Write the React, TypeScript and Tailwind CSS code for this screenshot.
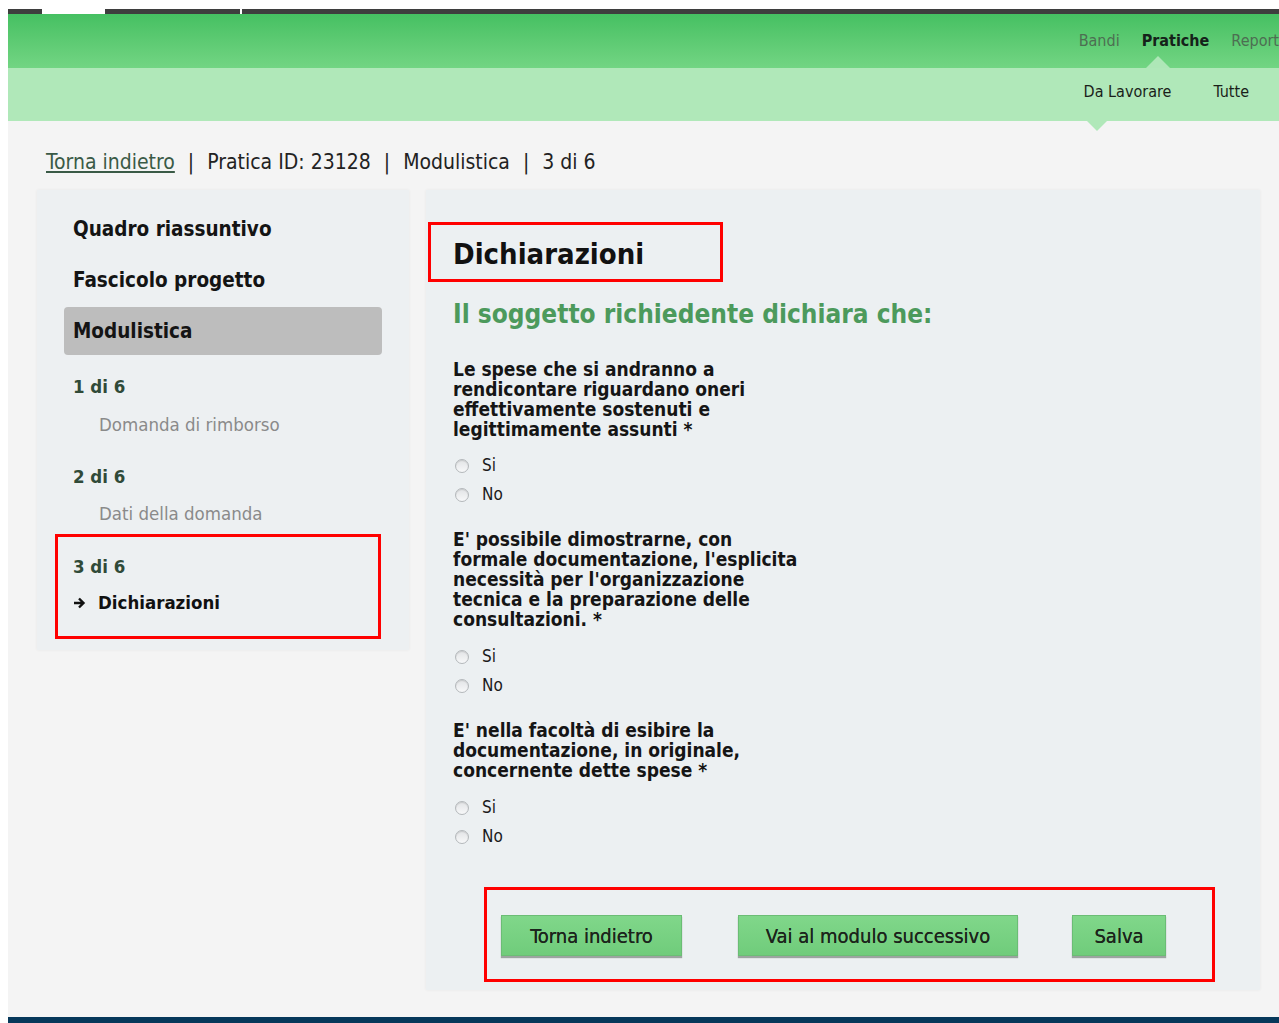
import React from 'react';

const font = { fontFamily: '"DejaVu Sans Condensed", "DejaVu Sans", sans-serif' };

interface Question {
  lines: string[];
}

const questions: Question[] = [
  {
    lines: [
      'Le spese che si andranno a',
      'rendicontare riguardano oneri',
      'effettivamente sostenuti e',
      'legittimamente assunti *',
    ],
  },
  {
    lines: [
      "E' possibile dimostrarne, con",
      "formale documentazione, l'esplicita",
      "necessità per l'organizzazione",
      'tecnica e la preparazione delle',
      'consultazioni. *',
    ],
  },
  {
    lines: [
      "E' nella facoltà di esibire la",
      'documentazione, in originale,',
      'concernente dette spese *',
    ],
  },
];

function Radio({ label }: { label: string }) {
  return (
    <label className="flex items-center h-[29px] text-[17px] text-[#1b1b1b]">
      <span className="w-[14px] h-[14px] rounded-full border border-[#b4b8bb] bg-gradient-to-b from-[#e2e4e6] to-[#f7f8f9] shadow-[inset_0_1px_1px_rgba(0,0,0,0.12)] ml-[2px]" />
      <span className="ml-[13px]">{label}</span>
    </label>
  );
}

function GreenButton({ width, children }: { width: string; children: React.ReactNode }) {
  return (
    <button
      className={`${width} h-[41px] bg-gradient-to-b from-[#80d78a] to-[#70cc7b] border border-[#6bbd75] shadow-[0_2px_1px_rgba(60,70,60,0.45)] text-[20px] text-[#1c241c] leading-none [text-shadow:0_0_0.6px_#1c241c]`}
    >
      {children}
    </button>
  );
}

function Sidebar() {
  return (
    <aside className="w-[372px] h-[460px] bg-[#edf0f2] shadow-[0_0_3px_rgba(0,0,0,0.06)] px-[27px] pt-[26px] shrink-0">
      <div className="px-[9px] h-[26px] flex items-center text-[20.5px] font-bold text-[#141414]">Quadro riassuntivo</div>
      <div className="px-[9px] h-[26px] mt-[25px] flex items-center text-[20.5px] font-bold text-[#141414]">Fascicolo progetto</div>
      <div className="px-[9px] h-[48px] mt-[14px] flex items-center rounded-[4px] bg-[#bdbdbd] text-[20.5px] font-bold text-[#141414]">Modulistica</div>

      <div className="px-[9px] mt-[21px] text-[18.5px] font-bold text-[#304a38] h-[22px] leading-[22px]">1 di 6</div>
      <div className="pl-[35px] mt-[16px] text-[18.5px] text-[#8a8a8a] h-[22px] leading-[22px]">Domanda di rimborso</div>
      <div className="px-[9px] mt-[30px] text-[18.5px] font-bold text-[#304a38] h-[22px] leading-[22px]">2 di 6</div>
      <div className="pl-[35px] mt-[15px] text-[18.5px] text-[#8a8a8a] h-[22px] leading-[22px]">Dati della domanda</div>

      <div className="-ml-[9px] mt-[9px] w-[326px] h-[105px] border-[3px] border-[#f00] pt-[19px]">
        <div className="pl-[15px] text-[18.5px] font-bold text-[#304a38] h-[22px] leading-[22px]">3 di 6</div>
        <div className="pl-[15px] mt-[14px] flex items-center text-[18.5px] font-bold text-[#111] h-[22px]">
          <svg width="13" height="12" viewBox="0 0 13 12" className="mr-[12px]">
            <path d="M1 6h9M6 1.5 10.5 6 6 10.5" stroke="#111" strokeWidth="2.4" fill="none" />
          </svg>
          Dichiarazioni
        </div>
      </div>
    </aside>
  );
}

// spacing above each question and above its radio group
const questionGap = ['mt-[30px]', 'mt-[20px]', 'mt-[20px]'];
const radioGap = ['mt-[12px]', 'mt-[13px]', 'mt-[13px]'];

function MainPanel() {
  return (
    <main className="w-[834px] h-[800px] bg-[#ecf0f2] shadow-[0_0_3px_rgba(0,0,0,0.06)] pt-[32px] pl-[2px]">
      <div className="w-[295px] h-[60px] border-[3px] border-[#f00] flex items-center pl-[22px] pt-[6px]">
        <h1 className="text-[29px] font-bold text-[#111]">Dichiarazioni</h1>
      </div>
      <div className="pl-[25px] pr-[30px]">
        <h2 className="mt-[17px] h-[30px] leading-[30px] text-[26px] font-bold text-[#4c9a5c]">
          Il soggetto richiedente dichiara che:
        </h2>

        {questions.map((q, i) => (
          <div key={i} className={questionGap[i]}>
            <p className="text-[19px] font-bold leading-[20px] text-[#151515] whitespace-nowrap">
              {q.lines.map((l, j) => (
                <span key={j} className="block">{l}</span>
              ))}
            </p>
            <div className={radioGap[i]}>
              <Radio label="Si" />
              <Radio label="No" />
            </div>
          </div>
        ))}
      </div>

      <div className="ml-[56px] mt-[36px] w-[731px] h-[95px] border-[3px] border-[#f00] flex items-center pl-[14px] pt-[2px]">
        <GreenButton width="w-[181px]">Torna indietro</GreenButton>
        <div className="ml-[56px]">
          <GreenButton width="w-[280px]">Vai al modulo successivo</GreenButton>
        </div>
        <div className="ml-[54px]">
          <GreenButton width="w-[94px]">Salva</GreenButton>
        </div>
      </div>
    </main>
  );
}

export default function App() {
  return (
    <div className="min-h-screen bg-white pl-[8px] overflow-hidden" style={font}>
      <div className="bg-[#f4f4f4] min-h-[1023px]">
        {/* top strip */}
        <div className="h-[9px] bg-white" />
        <div className="h-[5px] bg-[#3e3e3e] flex">
          <div className="w-[34px]" />
          <div className="w-[63px] bg-white" />
          <div className="w-[135px]" />
          <div className="w-[2px] bg-white" />
        </div>

        {/* main nav */}
        <div className="h-[54px] bg-gradient-to-b from-[#45c062] to-[#72d583] flex justify-end">
          <div className="flex items-stretch gap-[22px] text-[16px] whitespace-nowrap">
            <span className="flex items-center text-[#4d6e52]">Bandi</span>
            <span className="relative flex items-center text-[#15221a] font-bold">
              Pratiche
              <span className="absolute left-[4px] bottom-0 w-0 h-0 border-l-[12px] border-r-[12px] border-b-[12px] border-l-transparent border-r-transparent border-b-[#aee7b7]" />
            </span>
            <span className="flex items-center text-[#4d6e52]">Report</span>
          </div>
        </div>

        {/* sub nav */}
        <div className="h-[53px] bg-[#b0e8b9] flex justify-end pr-[30px]">
          <div className="flex items-stretch gap-[42px] text-[16px] text-[#1a1f1a]">
            <span className="relative flex items-center pb-[6px]">
              Da Lavorare
              <span className="absolute left-[3px] top-full w-0 h-0 border-l-[10px] border-r-[10px] border-t-[10px] border-l-transparent border-r-transparent border-t-[#b0e8b9]" />
            </span>
            <span className="flex items-center pb-[6px]">Tutte</span>
          </div>
        </div>

        {/* breadcrumb */}
        <div className="pl-[38px] pt-[26px] h-[69px] text-[21px] text-[#222] flex items-start gap-[13px]">
          <a className="underline text-[#3a5a46]">Torna indietro</a>
          <span>|</span>
          <span>Pratica ID: 23128</span>
          <span>|</span>
          <span>Modulistica</span>
          <span>|</span>
          <span>3 di 6</span>
        </div>

        <div className="flex gap-[17px] pl-[29px]">
          <Sidebar />
          <MainPanel />
        </div>

        <div className="mt-[27px] h-[6px] bg-[#06385a]" />
      </div>
    </div>
  );
}
